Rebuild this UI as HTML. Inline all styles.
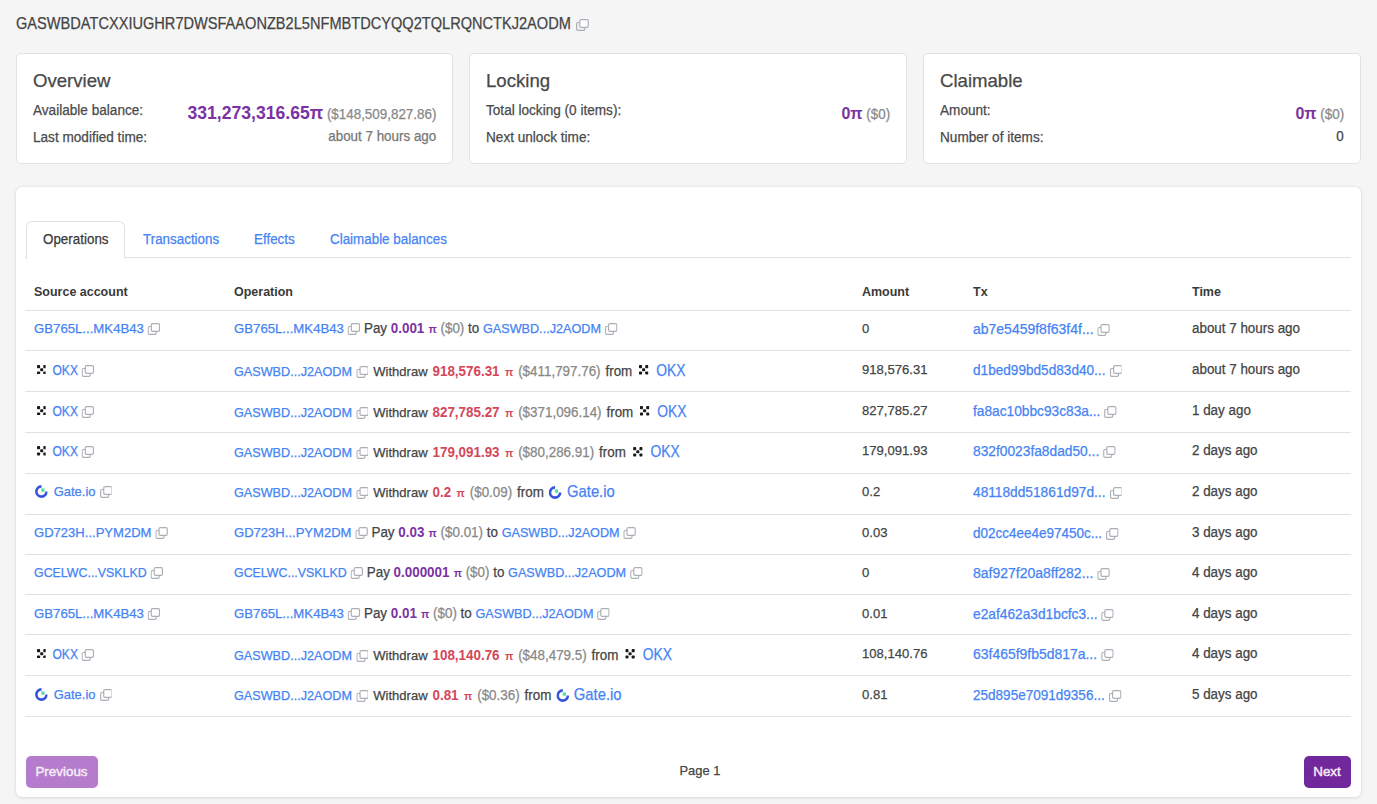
<!DOCTYPE html>
<html><head><meta charset="utf-8">
<style>
*{box-sizing:border-box;margin:0;padding:0}
html,body{width:1377px;height:804px;overflow:hidden}
body{background:#f5f5f5;font-family:"Liberation Sans",sans-serif;color:#444;font-size:13.4px;position:relative;-webkit-text-stroke:0.25px currentColor}
.abs{position:absolute;white-space:nowrap}
.title{left:16px;top:13px;font-size:16.5px;line-height:20px;color:#444;transform-origin:0 0;transform:scaleX(0.884)}
.card{position:absolute;top:53px;height:111px;width:438px;background:#fff;border:1px solid #e2e2e2;border-radius:5px}
.card h2{position:absolute;left:16px;top:15.3px;font-size:18.6px;font-weight:normal;line-height:24px;color:#484848}
.card .l{position:absolute;left:16px;font-size:14.008px;line-height:18px;color:#4a4a4a;white-space:nowrap;transform:scaleX(0.97087);transform-origin:0 0}
.card .r{position:absolute;right:16px;font-size:13.802px;line-height:18px;color:#777;white-space:nowrap;text-align:right;transform:scaleX(0.97087);transform-origin:100% 0}
.pu{color:#7b32a3;font-weight:bold;-webkit-text-stroke:0}
.rd{color:#d4465a;font-weight:bold;-webkit-text-stroke:0}
.g{color:#888}
.panel{position:absolute;left:16px;top:187px;width:1345px;height:610px;background:#fff;border-radius:6px;box-shadow:0 0 2px rgba(0,0,0,.10),0 1px 4px rgba(0,0,0,.09)}
.tabline{position:absolute;left:9px;width:1326px;top:70px;height:1px;background:#dee2e6}
.tab{position:absolute;top:33.5px;height:38px;left:9.5px;width:99px;border:1px solid #dee2e6;border-bottom:none;border-radius:6px 6px 0 0;background:#fff}
.tt{position:absolute;top:43px;line-height:20px;font-size:13.802px;transform:scaleX(0.97087);transform-origin:0 0;color:#4583f4;white-space:nowrap}
.tt.act{color:#3a3a3a}
.hdr{-webkit-text-stroke:0;position:absolute;top:95.3px;line-height:20px;font-size:12.875px;transform:scaleX(0.97087);transform-origin:0 0;font-weight:bold;color:#3a3a3a;white-space:nowrap}
.row{position:absolute;left:25px;width:1326px;border-top:1px solid #dee2e6}
.row:last-of-type{}
.c{position:absolute;top:9.2px;line-height:18px;white-space:nowrap;color:#444;font-size:13.802px;transform:scaleX(0.97087);transform-origin:0 0}
.c1{left:8.5px} .c2{left:208.5px} .wd{word-spacing:1.236px} .wdw{font-size:13.442px} .c3{left:836.5px;font-size:13.493px} .c4{left:947.5px} .c5{left:1166.5px}
a{color:#4583f4;text-decoration:none}
.cp{vertical-align:-2px;margin-left:4.120px;margin-right:-0.206px}
.okx{vertical-align:-0.6px} .c2 .okx{margin:0 3.090px 0 2.060px;vertical-align:0.6px} .c1 .okx{margin:0 2.575px 0 2.575px;vertical-align:0.4px} .c1 .gate{margin:0 2.060px 0 1.030px}
.gate{vertical-align:-2px}
.big{font-size:16.480px;display:inline-block;transform:scaleX(0.865);transform-origin:0 50%} .ac{font-size:13.184px} .hx{font-size:14.317px}
.pi{-webkit-text-stroke:0;font-size:11.124px;margin-left:0.515px}
.btn{position:absolute;top:568.5px;height:32px;border-radius:5px;color:#f5ecf8;font-size:13.4px;-webkit-text-stroke:0.45px currentColor;line-height:32px;text-align:center}
</style></head><body>
<div class="abs title">GASWBDATCXXIUGHR7DWSFAAONZB2L5NFMBTDCYQQ2TQLRQNCTKJ2AODM</div><div class="abs" style="left:576px;top:19px;line-height:0"><svg class="cpt" width="12.875" height="12" viewBox="0 0 12.5 12" preserveAspectRatio="none"><rect x="0.6" y="3.5" width="8" height="7.9" rx="1.3" fill="none" stroke="#acb0b6" stroke-width="1.2"/><rect x="3.7" y="0.6" width="8.2" height="7.8" rx="1.3" fill="#fff" stroke="#acb0b6" stroke-width="1.2"/></svg></div>

<div class="card" style="left:16px;width:437px">
 <h2>Overview</h2>
 <div class="l" style="top:47px">Available balance:</div>
 <div class="r" style="top:50px"><span class="pu" style="font-size:18.128px">331,273,316.65π</span> <span class="g">($148,509,827.86)</span></div>
 <div class="l" style="top:74.3px">Last modified time:</div>
 <div class="r" style="top:74px">about 7 hours ago</div>
</div>
<div class="card" style="left:469px">
 <h2>Locking</h2>
 <div class="l" style="top:47px">Total locking (0 items):</div>
 <div class="r" style="top:50px"><span class="pu" style="font-size:16.480px">0π</span> <span class="g">($0)</span></div>
 <div class="l" style="top:74.3px">Next unlock time:</div>
</div>
<div class="card" style="left:923px">
 <h2>Claimable</h2>
 <div class="l" style="top:47px">Amount:</div>
 <div class="r" style="top:50px"><span class="pu" style="font-size:16.480px">0π</span> <span class="g">($0)</span></div>
 <div class="l" style="top:74.3px">Number of items:</div>
 <div class="r" style="top:74px;color:#444">0</div>
</div>

<div class="panel">
 <div class="tabline"></div>
 <div class="tab"></div>
 <div class="tt act" style="left:26.5px">Operations</div>
 <div class="tt" style="left:127px">Transactions</div>
 <div class="tt" style="left:238px">Effects</div>
 <div class="tt" style="left:313.5px">Claimable balances</div>
 <div class="hdr" style="left:17.5px">Source account</div>
 <div class="hdr" style="left:217.5px">Operation</div>
 <div class="hdr" style="left:845.5px">Amount</div>
 <div class="hdr" style="left:956.5px">Tx</div>
 <div class="hdr" style="left:1175.5px">Time</div>
 <div class="btn" style="left:9.5px;width:72px;background:#b57bcc">Previous</div>
 <div class="abs" style="left:663.5px;top:575px;line-height:18px;color:#444;font-size:12.9px">Page 1</div>
 <div class="btn" style="left:1287.5px;width:47px;background:#72279d">Next</div>
</div>
<div style="position:absolute;left:0;top:0;width:0;height:0">
<div class="row" style="top:310.30px;height:40.1px">
<div class="c c1"><a class="ac" style="font-size:13.596px">GB765L...MK4B43</a><svg class="cp" width="12.875" height="12" viewBox="0 0 12.5 12" preserveAspectRatio="none"><rect x="0.6" y="3.5" width="8" height="7.9" rx="1.3" fill="none" stroke="#acb0b6" stroke-width="1.2"/><rect x="3.7" y="0.6" width="8.2" height="7.8" rx="1.3" fill="#fff" stroke="#acb0b6" stroke-width="1.2"/></svg></div><div class="c c2"><a class="ac" style="font-size:13.596px">GB765L...MK4B43</a><svg class="cp" width="12.875" height="12" viewBox="0 0 12.5 12" preserveAspectRatio="none"><rect x="0.6" y="3.5" width="8" height="7.9" rx="1.3" fill="none" stroke="#acb0b6" stroke-width="1.2"/><rect x="3.7" y="0.6" width="8.2" height="7.8" rx="1.3" fill="#fff" stroke="#acb0b6" stroke-width="1.2"/></svg> Pay <b class="pu">0.001 <span class="pi">π</span></b> <span class="g">($0)</span> to <a class="ac" style="font-size:13.030px">GASWBD...J2AODM</a><svg class="cp" width="12.875" height="12" viewBox="0 0 12.5 12" preserveAspectRatio="none"><rect x="0.6" y="3.5" width="8" height="7.9" rx="1.3" fill="none" stroke="#acb0b6" stroke-width="1.2"/><rect x="3.7" y="0.6" width="8.2" height="7.8" rx="1.3" fill="#fff" stroke="#acb0b6" stroke-width="1.2"/></svg></div><div class="c c3">0</div><div class="c c4"><a class="hx" style="font-size:14.420px">ab7e5459f8f63f4f...</a><svg class="cp" width="12.875" height="12" viewBox="0 0 12.5 12" preserveAspectRatio="none"><rect x="0.6" y="3.5" width="8" height="7.9" rx="1.3" fill="none" stroke="#acb0b6" stroke-width="1.2"/><rect x="3.7" y="0.6" width="8.2" height="7.8" rx="1.3" fill="#fff" stroke="#acb0b6" stroke-width="1.2"/></svg></div><div class="c c5">about 7 hours ago</div></div><div class="row" style="top:350.40px;height:40.93px">
<div class="c c1"><svg class="okx" width="9.888" height="9.6" viewBox="0 0 9.6 9.6" preserveAspectRatio="none"><g fill="#1a1a1a"><rect x="0.1" y="0.1" width="3.1" height="3.1" rx="0.8"/><rect x="6.4" y="0.1" width="3.1" height="3.1" rx="0.8"/><rect x="3.25" y="3.25" width="3.1" height="3.1" rx="0.8"/><rect x="0.1" y="6.4" width="3.1" height="3.1" rx="0.8"/><rect x="6.4" y="6.4" width="3.1" height="3.1" rx="0.8"/></g></svg> <a class="ac" style="font-size:14.420px;display:inline-block;transform:scaleX(0.865);transform-origin:0 50%;margin-right:-4.326px">OKX</a><svg class="cp" width="12.875" height="12" viewBox="0 0 12.5 12" preserveAspectRatio="none"><rect x="0.6" y="3.5" width="8" height="7.9" rx="1.3" fill="none" stroke="#acb0b6" stroke-width="1.2"/><rect x="3.7" y="0.6" width="8.2" height="7.8" rx="1.3" fill="#fff" stroke="#acb0b6" stroke-width="1.2"/></svg></div><div class="c c2 wd"><a class="ac" style="font-size:13.030px">GASWBD...J2AODM</a><svg class="cp" width="12.875" height="12" viewBox="0 0 12.5 12" preserveAspectRatio="none"><rect x="0.6" y="3.5" width="8" height="7.9" rx="1.3" fill="none" stroke="#acb0b6" stroke-width="1.2"/><rect x="3.7" y="0.6" width="8.2" height="7.8" rx="1.3" fill="#fff" stroke="#acb0b6" stroke-width="1.2"/></svg> <span class="wdw">Withdraw</span> <b class="rd">918,576.31 <span class="pi">π</span></b> <span class="g">($411,797.76)</span> from <svg class="okx" width="9.888" height="9.6" viewBox="0 0 9.6 9.6" preserveAspectRatio="none"><g fill="#1a1a1a"><rect x="0.1" y="0.1" width="3.1" height="3.1" rx="0.8"/><rect x="6.4" y="0.1" width="3.1" height="3.1" rx="0.8"/><rect x="3.25" y="3.25" width="3.1" height="3.1" rx="0.8"/><rect x="0.1" y="6.4" width="3.1" height="3.1" rx="0.8"/><rect x="6.4" y="6.4" width="3.1" height="3.1" rx="0.8"/></g></svg> <a class="big">OKX</a></div><div class="c c3">918,576.31</div><div class="c c4"><a class="hx" style="font-size:14.039px">d1bed99bd5d83d40...</a><svg class="cp" width="12.875" height="12" viewBox="0 0 12.5 12" preserveAspectRatio="none"><rect x="0.6" y="3.5" width="8" height="7.9" rx="1.3" fill="none" stroke="#acb0b6" stroke-width="1.2"/><rect x="3.7" y="0.6" width="8.2" height="7.8" rx="1.3" fill="#fff" stroke="#acb0b6" stroke-width="1.2"/></svg></div><div class="c c5">about 7 hours ago</div></div><div class="row" style="top:391.33px;height:40.93px">
<div class="c c1"><svg class="okx" width="9.888" height="9.6" viewBox="0 0 9.6 9.6" preserveAspectRatio="none"><g fill="#1a1a1a"><rect x="0.1" y="0.1" width="3.1" height="3.1" rx="0.8"/><rect x="6.4" y="0.1" width="3.1" height="3.1" rx="0.8"/><rect x="3.25" y="3.25" width="3.1" height="3.1" rx="0.8"/><rect x="0.1" y="6.4" width="3.1" height="3.1" rx="0.8"/><rect x="6.4" y="6.4" width="3.1" height="3.1" rx="0.8"/></g></svg> <a class="ac" style="font-size:14.420px;display:inline-block;transform:scaleX(0.865);transform-origin:0 50%;margin-right:-4.326px">OKX</a><svg class="cp" width="12.875" height="12" viewBox="0 0 12.5 12" preserveAspectRatio="none"><rect x="0.6" y="3.5" width="8" height="7.9" rx="1.3" fill="none" stroke="#acb0b6" stroke-width="1.2"/><rect x="3.7" y="0.6" width="8.2" height="7.8" rx="1.3" fill="#fff" stroke="#acb0b6" stroke-width="1.2"/></svg></div><div class="c c2 wd"><a class="ac" style="font-size:13.030px">GASWBD...J2AODM</a><svg class="cp" width="12.875" height="12" viewBox="0 0 12.5 12" preserveAspectRatio="none"><rect x="0.6" y="3.5" width="8" height="7.9" rx="1.3" fill="none" stroke="#acb0b6" stroke-width="1.2"/><rect x="3.7" y="0.6" width="8.2" height="7.8" rx="1.3" fill="#fff" stroke="#acb0b6" stroke-width="1.2"/></svg> <span class="wdw">Withdraw</span> <b class="rd">827,785.27 <span class="pi">π</span></b> <span class="g">($371,096.14)</span> from <svg class="okx" width="9.888" height="9.6" viewBox="0 0 9.6 9.6" preserveAspectRatio="none"><g fill="#1a1a1a"><rect x="0.1" y="0.1" width="3.1" height="3.1" rx="0.8"/><rect x="6.4" y="0.1" width="3.1" height="3.1" rx="0.8"/><rect x="3.25" y="3.25" width="3.1" height="3.1" rx="0.8"/><rect x="0.1" y="6.4" width="3.1" height="3.1" rx="0.8"/><rect x="6.4" y="6.4" width="3.1" height="3.1" rx="0.8"/></g></svg> <a class="big">OKX</a></div><div class="c c3">827,785.27</div><div class="c c4"><a class="hx" style="font-size:14.132px">fa8ac10bbc93c83a...</a><svg class="cp" width="12.875" height="12" viewBox="0 0 12.5 12" preserveAspectRatio="none"><rect x="0.6" y="3.5" width="8" height="7.9" rx="1.3" fill="none" stroke="#acb0b6" stroke-width="1.2"/><rect x="3.7" y="0.6" width="8.2" height="7.8" rx="1.3" fill="#fff" stroke="#acb0b6" stroke-width="1.2"/></svg></div><div class="c c5">1 day ago</div></div><div class="row" style="top:432.26px;height:40.93px">
<div class="c c1"><svg class="okx" width="9.888" height="9.6" viewBox="0 0 9.6 9.6" preserveAspectRatio="none"><g fill="#1a1a1a"><rect x="0.1" y="0.1" width="3.1" height="3.1" rx="0.8"/><rect x="6.4" y="0.1" width="3.1" height="3.1" rx="0.8"/><rect x="3.25" y="3.25" width="3.1" height="3.1" rx="0.8"/><rect x="0.1" y="6.4" width="3.1" height="3.1" rx="0.8"/><rect x="6.4" y="6.4" width="3.1" height="3.1" rx="0.8"/></g></svg> <a class="ac" style="font-size:14.420px;display:inline-block;transform:scaleX(0.865);transform-origin:0 50%;margin-right:-4.326px">OKX</a><svg class="cp" width="12.875" height="12" viewBox="0 0 12.5 12" preserveAspectRatio="none"><rect x="0.6" y="3.5" width="8" height="7.9" rx="1.3" fill="none" stroke="#acb0b6" stroke-width="1.2"/><rect x="3.7" y="0.6" width="8.2" height="7.8" rx="1.3" fill="#fff" stroke="#acb0b6" stroke-width="1.2"/></svg></div><div class="c c2 wd"><a class="ac" style="font-size:13.030px">GASWBD...J2AODM</a><svg class="cp" width="12.875" height="12" viewBox="0 0 12.5 12" preserveAspectRatio="none"><rect x="0.6" y="3.5" width="8" height="7.9" rx="1.3" fill="none" stroke="#acb0b6" stroke-width="1.2"/><rect x="3.7" y="0.6" width="8.2" height="7.8" rx="1.3" fill="#fff" stroke="#acb0b6" stroke-width="1.2"/></svg> <span class="wdw">Withdraw</span> <b class="rd">179,091.93 <span class="pi">π</span></b> <span class="g">($80,286.91)</span> from <svg class="okx" width="9.888" height="9.6" viewBox="0 0 9.6 9.6" preserveAspectRatio="none"><g fill="#1a1a1a"><rect x="0.1" y="0.1" width="3.1" height="3.1" rx="0.8"/><rect x="6.4" y="0.1" width="3.1" height="3.1" rx="0.8"/><rect x="3.25" y="3.25" width="3.1" height="3.1" rx="0.8"/><rect x="0.1" y="6.4" width="3.1" height="3.1" rx="0.8"/><rect x="6.4" y="6.4" width="3.1" height="3.1" rx="0.8"/></g></svg> <a class="big">OKX</a></div><div class="c c3">179,091.93</div><div class="c c4"><a class="hx" style="font-size:14.183px">832f0023fa8dad50...</a><svg class="cp" width="12.875" height="12" viewBox="0 0 12.5 12" preserveAspectRatio="none"><rect x="0.6" y="3.5" width="8" height="7.9" rx="1.3" fill="none" stroke="#acb0b6" stroke-width="1.2"/><rect x="3.7" y="0.6" width="8.2" height="7.8" rx="1.3" fill="#fff" stroke="#acb0b6" stroke-width="1.2"/></svg></div><div class="c c5">2 days ago</div></div><div class="row" style="top:473.19px;height:40.93px">
<div class="c c1"><svg class="gate" width="13.390" height="13" viewBox="0 0 13 13" preserveAspectRatio="none"><path d="M6.5 1.4 A5.1 5.1 0 1 0 11.6 6.5" fill="none" stroke="#3454e0" stroke-width="2.6"/><rect x="6.3" y="3.4" width="3.3" height="3.3" fill="#58dca2"/></svg> <a class="ac" style="font-size:13.390px">Gate.io</a><svg class="cp" width="12.875" height="12" viewBox="0 0 12.5 12" preserveAspectRatio="none"><rect x="0.6" y="3.5" width="8" height="7.9" rx="1.3" fill="none" stroke="#acb0b6" stroke-width="1.2"/><rect x="3.7" y="0.6" width="8.2" height="7.8" rx="1.3" fill="#fff" stroke="#acb0b6" stroke-width="1.2"/></svg></div><div class="c c2 wd"><a class="ac" style="font-size:13.030px">GASWBD...J2AODM</a><svg class="cp" width="12.875" height="12" viewBox="0 0 12.5 12" preserveAspectRatio="none"><rect x="0.6" y="3.5" width="8" height="7.9" rx="1.3" fill="none" stroke="#acb0b6" stroke-width="1.2"/><rect x="3.7" y="0.6" width="8.2" height="7.8" rx="1.3" fill="#fff" stroke="#acb0b6" stroke-width="1.2"/></svg> <span class="wdw">Withdraw</span> <b class="rd">0.2 <span class="pi">π</span></b> <span class="g">($0.09)</span> from <svg class="gate" width="13.390" height="13" viewBox="0 0 13 13" preserveAspectRatio="none"><path d="M6.5 1.4 A5.1 5.1 0 1 0 11.6 6.5" fill="none" stroke="#3454e0" stroke-width="2.6"/><rect x="6.3" y="3.4" width="3.3" height="3.3" fill="#58dca2"/></svg> <a class="big" style="font-size:16.789px;transform:scaleX(0.91)">Gate.io</a></div><div class="c c3">0.2</div><div class="c c4"><a class="hx" style="font-size:14.142px">48118dd51861d97d...</a><svg class="cp" width="12.875" height="12" viewBox="0 0 12.5 12" preserveAspectRatio="none"><rect x="0.6" y="3.5" width="8" height="7.9" rx="1.3" fill="none" stroke="#acb0b6" stroke-width="1.2"/><rect x="3.7" y="0.6" width="8.2" height="7.8" rx="1.3" fill="#fff" stroke="#acb0b6" stroke-width="1.2"/></svg></div><div class="c c5">2 days ago</div></div><div class="row" style="top:514.12px;height:40.1px">
<div class="c c1"><a class="ac" style="font-size:13.442px">GD723H...PYM2DM</a><svg class="cp" width="12.875" height="12" viewBox="0 0 12.5 12" preserveAspectRatio="none"><rect x="0.6" y="3.5" width="8" height="7.9" rx="1.3" fill="none" stroke="#acb0b6" stroke-width="1.2"/><rect x="3.7" y="0.6" width="8.2" height="7.8" rx="1.3" fill="#fff" stroke="#acb0b6" stroke-width="1.2"/></svg></div><div class="c c2"><a class="ac" style="font-size:13.442px">GD723H...PYM2DM</a><svg class="cp" width="12.875" height="12" viewBox="0 0 12.5 12" preserveAspectRatio="none"><rect x="0.6" y="3.5" width="8" height="7.9" rx="1.3" fill="none" stroke="#acb0b6" stroke-width="1.2"/><rect x="3.7" y="0.6" width="8.2" height="7.8" rx="1.3" fill="#fff" stroke="#acb0b6" stroke-width="1.2"/></svg> Pay <b class="pu">0.03 <span class="pi">π</span></b> <span class="g">($0.01)</span> to <a class="ac" style="font-size:13.030px">GASWBD...J2AODM</a><svg class="cp" width="12.875" height="12" viewBox="0 0 12.5 12" preserveAspectRatio="none"><rect x="0.6" y="3.5" width="8" height="7.9" rx="1.3" fill="none" stroke="#acb0b6" stroke-width="1.2"/><rect x="3.7" y="0.6" width="8.2" height="7.8" rx="1.3" fill="#fff" stroke="#acb0b6" stroke-width="1.2"/></svg></div><div class="c c3">0.03</div><div class="c c4"><a class="hx" style="font-size:13.905px">d02cc4ee4e97450c...</a><svg class="cp" width="12.875" height="12" viewBox="0 0 12.5 12" preserveAspectRatio="none"><rect x="0.6" y="3.5" width="8" height="7.9" rx="1.3" fill="none" stroke="#acb0b6" stroke-width="1.2"/><rect x="3.7" y="0.6" width="8.2" height="7.8" rx="1.3" fill="#fff" stroke="#acb0b6" stroke-width="1.2"/></svg></div><div class="c c5">3 days ago</div></div><div class="row" style="top:554.22px;height:40.1px">
<div class="c c1"><a class="ac" style="font-size:12.772px">GCELWC...VSKLKD</a><svg class="cp" width="12.875" height="12" viewBox="0 0 12.5 12" preserveAspectRatio="none"><rect x="0.6" y="3.5" width="8" height="7.9" rx="1.3" fill="none" stroke="#acb0b6" stroke-width="1.2"/><rect x="3.7" y="0.6" width="8.2" height="7.8" rx="1.3" fill="#fff" stroke="#acb0b6" stroke-width="1.2"/></svg></div><div class="c c2"><a class="ac" style="font-size:12.772px">GCELWC...VSKLKD</a><svg class="cp" width="12.875" height="12" viewBox="0 0 12.5 12" preserveAspectRatio="none"><rect x="0.6" y="3.5" width="8" height="7.9" rx="1.3" fill="none" stroke="#acb0b6" stroke-width="1.2"/><rect x="3.7" y="0.6" width="8.2" height="7.8" rx="1.3" fill="#fff" stroke="#acb0b6" stroke-width="1.2"/></svg> Pay <b class="pu">0.000001 <span class="pi">π</span></b> <span class="g">($0)</span> to <a class="ac" style="font-size:13.030px">GASWBD...J2AODM</a><svg class="cp" width="12.875" height="12" viewBox="0 0 12.5 12" preserveAspectRatio="none"><rect x="0.6" y="3.5" width="8" height="7.9" rx="1.3" fill="none" stroke="#acb0b6" stroke-width="1.2"/><rect x="3.7" y="0.6" width="8.2" height="7.8" rx="1.3" fill="#fff" stroke="#acb0b6" stroke-width="1.2"/></svg></div><div class="c c3">0</div><div class="c c4"><a class="hx" style="font-size:14.420px">8af927f20a8ff282...</a><svg class="cp" width="12.875" height="12" viewBox="0 0 12.5 12" preserveAspectRatio="none"><rect x="0.6" y="3.5" width="8" height="7.9" rx="1.3" fill="none" stroke="#acb0b6" stroke-width="1.2"/><rect x="3.7" y="0.6" width="8.2" height="7.8" rx="1.3" fill="#fff" stroke="#acb0b6" stroke-width="1.2"/></svg></div><div class="c c5">4 days ago</div></div><div class="row" style="top:594.32px;height:40.1px">
<div class="c c1"><a class="ac" style="font-size:13.596px">GB765L...MK4B43</a><svg class="cp" width="12.875" height="12" viewBox="0 0 12.5 12" preserveAspectRatio="none"><rect x="0.6" y="3.5" width="8" height="7.9" rx="1.3" fill="none" stroke="#acb0b6" stroke-width="1.2"/><rect x="3.7" y="0.6" width="8.2" height="7.8" rx="1.3" fill="#fff" stroke="#acb0b6" stroke-width="1.2"/></svg></div><div class="c c2"><a class="ac" style="font-size:13.596px">GB765L...MK4B43</a><svg class="cp" width="12.875" height="12" viewBox="0 0 12.5 12" preserveAspectRatio="none"><rect x="0.6" y="3.5" width="8" height="7.9" rx="1.3" fill="none" stroke="#acb0b6" stroke-width="1.2"/><rect x="3.7" y="0.6" width="8.2" height="7.8" rx="1.3" fill="#fff" stroke="#acb0b6" stroke-width="1.2"/></svg> Pay <b class="pu">0.01 <span class="pi">π</span></b> <span class="g">($0)</span> to <a class="ac" style="font-size:13.030px">GASWBD...J2AODM</a><svg class="cp" width="12.875" height="12" viewBox="0 0 12.5 12" preserveAspectRatio="none"><rect x="0.6" y="3.5" width="8" height="7.9" rx="1.3" fill="none" stroke="#acb0b6" stroke-width="1.2"/><rect x="3.7" y="0.6" width="8.2" height="7.8" rx="1.3" fill="#fff" stroke="#acb0b6" stroke-width="1.2"/></svg></div><div class="c c3">0.01</div><div class="c c4"><a class="hx" style="font-size:14.162px">e2af462a3d1bcfc3...</a><svg class="cp" width="12.875" height="12" viewBox="0 0 12.5 12" preserveAspectRatio="none"><rect x="0.6" y="3.5" width="8" height="7.9" rx="1.3" fill="none" stroke="#acb0b6" stroke-width="1.2"/><rect x="3.7" y="0.6" width="8.2" height="7.8" rx="1.3" fill="#fff" stroke="#acb0b6" stroke-width="1.2"/></svg></div><div class="c c5">4 days ago</div></div><div class="row" style="top:634.42px;height:40.93px">
<div class="c c1"><svg class="okx" width="9.888" height="9.6" viewBox="0 0 9.6 9.6" preserveAspectRatio="none"><g fill="#1a1a1a"><rect x="0.1" y="0.1" width="3.1" height="3.1" rx="0.8"/><rect x="6.4" y="0.1" width="3.1" height="3.1" rx="0.8"/><rect x="3.25" y="3.25" width="3.1" height="3.1" rx="0.8"/><rect x="0.1" y="6.4" width="3.1" height="3.1" rx="0.8"/><rect x="6.4" y="6.4" width="3.1" height="3.1" rx="0.8"/></g></svg> <a class="ac" style="font-size:14.420px;display:inline-block;transform:scaleX(0.865);transform-origin:0 50%;margin-right:-4.326px">OKX</a><svg class="cp" width="12.875" height="12" viewBox="0 0 12.5 12" preserveAspectRatio="none"><rect x="0.6" y="3.5" width="8" height="7.9" rx="1.3" fill="none" stroke="#acb0b6" stroke-width="1.2"/><rect x="3.7" y="0.6" width="8.2" height="7.8" rx="1.3" fill="#fff" stroke="#acb0b6" stroke-width="1.2"/></svg></div><div class="c c2 wd"><a class="ac" style="font-size:13.030px">GASWBD...J2AODM</a><svg class="cp" width="12.875" height="12" viewBox="0 0 12.5 12" preserveAspectRatio="none"><rect x="0.6" y="3.5" width="8" height="7.9" rx="1.3" fill="none" stroke="#acb0b6" stroke-width="1.2"/><rect x="3.7" y="0.6" width="8.2" height="7.8" rx="1.3" fill="#fff" stroke="#acb0b6" stroke-width="1.2"/></svg> <span class="wdw">Withdraw</span> <b class="rd">108,140.76 <span class="pi">π</span></b> <span class="g">($48,479.5)</span> from <svg class="okx" width="9.888" height="9.6" viewBox="0 0 9.6 9.6" preserveAspectRatio="none"><g fill="#1a1a1a"><rect x="0.1" y="0.1" width="3.1" height="3.1" rx="0.8"/><rect x="6.4" y="0.1" width="3.1" height="3.1" rx="0.8"/><rect x="3.25" y="3.25" width="3.1" height="3.1" rx="0.8"/><rect x="0.1" y="6.4" width="3.1" height="3.1" rx="0.8"/><rect x="6.4" y="6.4" width="3.1" height="3.1" rx="0.8"/></g></svg> <a class="big">OKX</a></div><div class="c c3">108,140.76</div><div class="c c4"><a class="hx" style="font-size:14.368px">63f465f9fb5d817a...</a><svg class="cp" width="12.875" height="12" viewBox="0 0 12.5 12" preserveAspectRatio="none"><rect x="0.6" y="3.5" width="8" height="7.9" rx="1.3" fill="none" stroke="#acb0b6" stroke-width="1.2"/><rect x="3.7" y="0.6" width="8.2" height="7.8" rx="1.3" fill="#fff" stroke="#acb0b6" stroke-width="1.2"/></svg></div><div class="c c5">4 days ago</div></div><div class="row" style="top:675.35px;height:40.93px">
<div class="c c1"><svg class="gate" width="13.390" height="13" viewBox="0 0 13 13" preserveAspectRatio="none"><path d="M6.5 1.4 A5.1 5.1 0 1 0 11.6 6.5" fill="none" stroke="#3454e0" stroke-width="2.6"/><rect x="6.3" y="3.4" width="3.3" height="3.3" fill="#58dca2"/></svg> <a class="ac" style="font-size:13.390px">Gate.io</a><svg class="cp" width="12.875" height="12" viewBox="0 0 12.5 12" preserveAspectRatio="none"><rect x="0.6" y="3.5" width="8" height="7.9" rx="1.3" fill="none" stroke="#acb0b6" stroke-width="1.2"/><rect x="3.7" y="0.6" width="8.2" height="7.8" rx="1.3" fill="#fff" stroke="#acb0b6" stroke-width="1.2"/></svg></div><div class="c c2 wd"><a class="ac" style="font-size:13.030px">GASWBD...J2AODM</a><svg class="cp" width="12.875" height="12" viewBox="0 0 12.5 12" preserveAspectRatio="none"><rect x="0.6" y="3.5" width="8" height="7.9" rx="1.3" fill="none" stroke="#acb0b6" stroke-width="1.2"/><rect x="3.7" y="0.6" width="8.2" height="7.8" rx="1.3" fill="#fff" stroke="#acb0b6" stroke-width="1.2"/></svg> <span class="wdw">Withdraw</span> <b class="rd">0.81 <span class="pi">π</span></b> <span class="g">($0.36)</span> from <svg class="gate" width="13.390" height="13" viewBox="0 0 13 13" preserveAspectRatio="none"><path d="M6.5 1.4 A5.1 5.1 0 1 0 11.6 6.5" fill="none" stroke="#3454e0" stroke-width="2.6"/><rect x="6.3" y="3.4" width="3.3" height="3.3" fill="#58dca2"/></svg> <a class="big" style="font-size:16.789px;transform:scaleX(0.91)">Gate.io</a></div><div class="c c3">0.81</div><div class="c c4"><a class="hx" style="font-size:13.957px">25d895e7091d9356...</a><svg class="cp" width="12.875" height="12" viewBox="0 0 12.5 12" preserveAspectRatio="none"><rect x="0.6" y="3.5" width="8" height="7.9" rx="1.3" fill="none" stroke="#acb0b6" stroke-width="1.2"/><rect x="3.7" y="0.6" width="8.2" height="7.8" rx="1.3" fill="#fff" stroke="#acb0b6" stroke-width="1.2"/></svg></div><div class="c c5">5 days ago</div></div>
<div class="row" style="top:716.28px;height:1px"></div>
</div>
</body></html>
